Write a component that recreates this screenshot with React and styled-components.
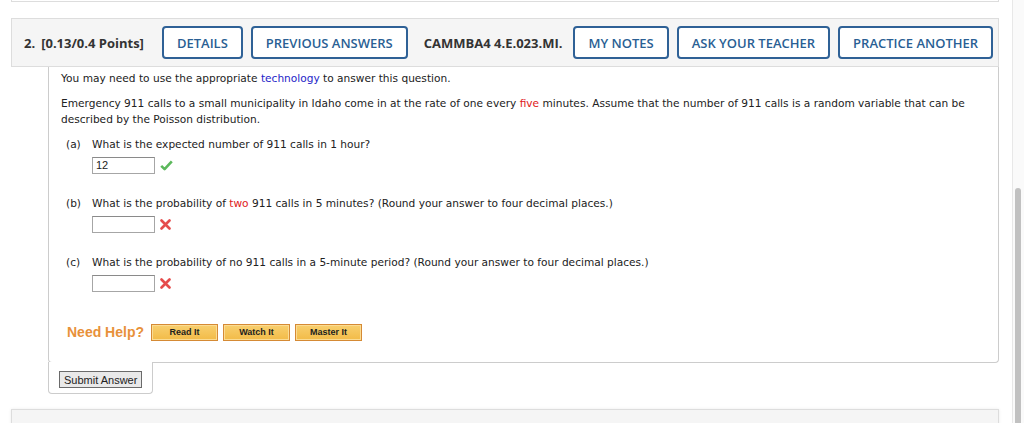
import React from 'react';
import styled, { createGlobalStyle } from 'styled-components';

const GlobalStyle = createGlobalStyle`
  html, body {
    margin: 0;
    padding: 0;
    background: #fff;
    overflow: hidden;
  }
`;

const Page = styled.div`
  display: flex;
  height: 423px;
  overflow: hidden;
`;

const Main = styled.div`
  flex: 1;
  min-width: 0;
  padding: 0 13px 0 11px;
`;

const PrevCard = styled.div`
  height: 1px;
  border: 1px solid #ddd;
  border-top: 0;
  background: #fff;
`;

const NextCard = styled.div`
  margin-top: 15px;
  height: 30px;
  background: #f5f5f5;
  border: 1px solid #ddd;
  box-shadow: 0 0 3px rgba(0, 0, 0, 0.08);
`;

const Question = styled.div`
  margin-top: 16px;
`;

const Header = styled.div`
  display: flex;
  align-items: center;
  gap: 8px;
  padding: 7px 12px;
  background: #f5f5f5;
  border: 1px solid #ddd;
  font-family: 'Open Sans', 'Liberation Sans', sans-serif;
  font-size: 13px;
  color: #333;
`;

const Label = styled.span`
  font-weight: 700;
  margin: ${(p) => p.$margin || '0'};
  white-space: nowrap;
`;

const Num = styled.span`
  margin-right: 6px;
`;

const OutlineButton = styled.button`
  height: 33px;
  box-sizing: border-box;
  padding: 0 13px;
  border: 2px solid #2f6196;
  border-radius: 4px;
  background: #fff;
  color: #2a5f94;
  font-family: 'Open Sans', 'Liberation Sans', sans-serif;
  font-size: 13px;
  font-weight: 600;
  text-transform: uppercase;
  white-space: nowrap;
  cursor: pointer;
`;

const Body = styled.div`
  margin-left: 37px;
  padding: 3px 13px 20px 12px;
  border: 1px solid #ccc;
  border-top: 0;
  border-radius: 0 0 4px 4px;
  background: #fff;
  font-family: Verdana, 'DejaVu Sans', sans-serif;
  font-size: 10.6px;
  line-height: 16px;
  color: #222;
`;

const Para = styled.p`
  margin: 0 0 9px;
`;

const Link = styled.span`
  color: #2525c8;
`;

const Red = styled.span`
  color: #e02020;
`;

const Part = styled.div`
  margin-top: ${(p) => p.$top || '21px'};
  padding-left: 5px;
`;

const PartLine = styled.div`
  display: flex;
`;

const PartLabel = styled.span`
  width: 26px;
  flex: none;
`;

const AnswerRow = styled.div`
  display: flex;
  align-items: center;
  gap: 5px;
  margin-top: 5px;
  padding-left: 26px;
`;

const Input = styled.div`
  width: 63px;
  height: 17px;
  box-sizing: border-box;
  border: 1px solid #a6a6a6;
  border-top-color: #8a8a8a;
  padding: 0 3px;
  font-family: 'Liberation Sans', Arial, sans-serif;
  font-size: 11px;
  line-height: 15px;
  color: #222;
  background: #fff;
`;

const HelpRow = styled.div`
  display: flex;
  align-items: center;
  gap: 5px;
  margin-top: 30px;
  padding-left: 6px;
  height: 20px;
`;

const HelpTitle = styled.span`
  font-family: 'Liberation Sans', Arial, sans-serif;
  font-weight: 700;
  font-size: 14px;
  color: #e8913a;
  margin-right: 2px;
`;

const HelpButton = styled.button`
  width: 67px;
  height: 17px;
  box-sizing: border-box;
  padding: 0;
  border: 1px solid #d58a35;
  box-shadow: inset 0 0 0 1px #fbdc93;
  background: linear-gradient(#f8cf6e, #f2bb48);
  font-family: 'Liberation Sans', Arial, sans-serif;
  font-weight: 700;
  font-size: 9px;
  color: #1d1d1d;
  cursor: pointer;
`;

const SubmitTab = styled.div`
  position: relative;
  display: flex;
  margin: -1px 0 0 37px;
  width: 105px;
  box-sizing: border-box;
  padding: 9px 0 5px 10px;
  border: 1px solid #ccc;
  border-top: 0;
  border-radius: 0 0 4px 4px;
  background: #fff;
`;

const SubmitButton = styled.button`
  height: 17px;
  box-sizing: border-box;
  padding: 0 4px;
  border: 1px solid #6a6a6a;
  background: #e9e9e9;
  font-family: 'Liberation Sans', Arial, sans-serif;
  font-size: 11px;
  color: #222;
  cursor: pointer;
`;

const ScrollTrack = styled.div`
  width: 11px;
  flex: none;
  border-left: 1px solid #e8e8e8;
  background: #fafafa;
`;

const Thumb = styled.div`
  margin: 188px 0 0 2px;
  width: 6px;
  height: 260px;
  border-radius: 3px;
  background: #c1c1c1;
`;

const Check = () => (
  <svg width="13" height="11" viewBox="0 0 13 11">
    <path d="M1.2 5.8 L4.6 9.2 L11.8 1.4" fill="none" stroke="#5cb85c" strokeWidth="2.6" strokeLinejoin="round" />
  </svg>
);

const Cross = () => (
  <svg width="11" height="11" viewBox="0 0 11 11">
    <path d="M1.5 1.5 L9.5 9.5 M9.5 1.5 L1.5 9.5" fill="none" stroke="#e54b4b" strokeWidth="2.6" strokeLinecap="round" />
  </svg>
);

const parts = [
  { label: '(a)', text: 'What is the expected number of 911 calls in 1 hour?', value: '12', ok: true },
  {
    label: '(b)',
    text: (
      <>
        What is the probability of <Red>two</Red> 911 calls in 5 minutes? (Round your answer to four decimal places.)
      </>
    ),
    value: '',
    ok: false,
  },
  {
    label: '(c)',
    text: 'What is the probability of no 911 calls in a 5-minute period? (Round your answer to four decimal places.)',
    value: '',
    ok: false,
  },
];

export default function App() {
  return (
    <>
      <GlobalStyle />
      <Page>
        <Main>
          <PrevCard />
          <Question>
            <Header>
              <Label $margin="0 10px 0 0">
                <Num>2.</Num>[0.13/0.4 Points]
              </Label>
              <OutlineButton>Details</OutlineButton>
              <OutlineButton>Previous Answers</OutlineButton>
              <Label $margin="0 3px 0 8px">CAMMBA4 4.E.023.MI.</Label>
              <OutlineButton>My Notes</OutlineButton>
              <OutlineButton>Ask Your Teacher</OutlineButton>
              <OutlineButton>Practice Another</OutlineButton>
            </Header>
            <Body>
              <Para>
                You may need to use the appropriate <Link>technology</Link> to answer this question.
              </Para>
              <Para>
                Emergency 911 calls to a small municipality in Idaho come in at the rate of one every <Red>five</Red>{' '}
                minutes. Assume that the number of 911 calls is a random variable that can be described by the Poisson
                distribution.
              </Para>
              {parts.map((p, i) => (
                <Part key={p.label} $top={i === 0 ? '7px' : '21px'}>
                  <PartLine>
                    <PartLabel>{p.label}</PartLabel>
                    <span>{p.text}</span>
                  </PartLine>
                  <AnswerRow>
                    <Input>{p.value}</Input>
                    {p.ok ? <Check /> : <Cross />}
                  </AnswerRow>
                </Part>
              ))}
              <HelpRow>
                <HelpTitle>Need Help?</HelpTitle>
                <HelpButton>Read It</HelpButton>
                <HelpButton>Watch It</HelpButton>
                <HelpButton>Master It</HelpButton>
              </HelpRow>
            </Body>
            <SubmitTab>
              <SubmitButton>Submit Answer</SubmitButton>
            </SubmitTab>
          </Question>
          <NextCard />
        </Main>
        <ScrollTrack>
          <Thumb />
        </ScrollTrack>
      </Page>
    </>
  );
}
